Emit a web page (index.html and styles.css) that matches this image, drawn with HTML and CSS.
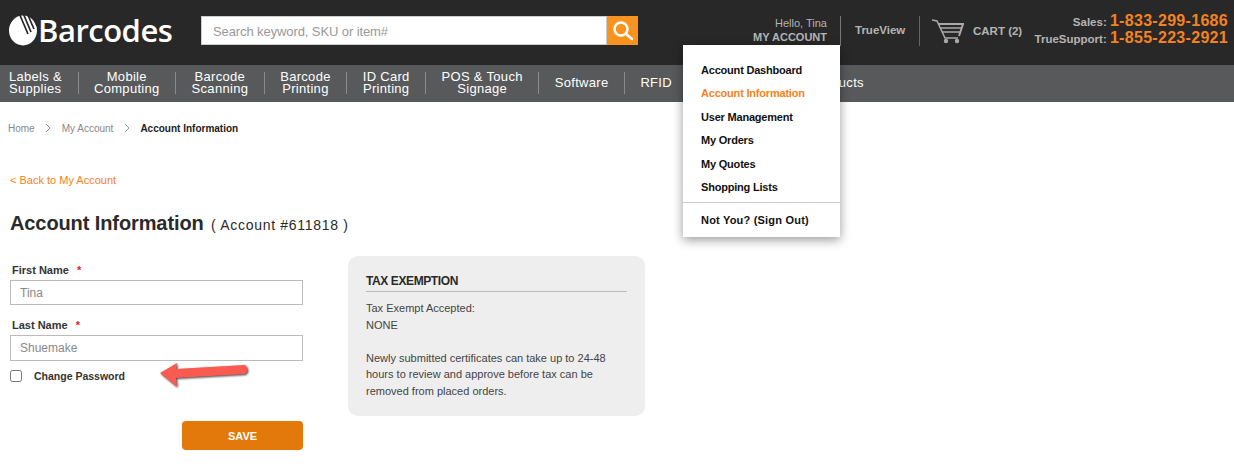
FILE: index.html
```html
<!DOCTYPE html>
<html lang="en">
<head>
  <meta charset="UTF-8" />
  <title>Account Information</title>
  <link rel="stylesheet" href="styles.css">
</head>
<body>

  <!-- Top bar -->
  <header class="topbar">
    <a class="logo" href="#">
      <svg class="logo-mark" viewBox="0 0 30 32" width="30" height="32">
        <ellipse cx="15" cy="16.500" rx="14" ry="15" fill="#fff"/>
        <path d="M11 -1 L20 20 M15 -1 L23 18 M19 -1 L26 15 M24 0 L29 12" stroke="#282828" stroke-width="1.700" fill="none"/>
      </svg>
      <span>Barcodes</span>
    </a>
    <form class="search">
      <input class="search-input" type="text" placeholder="Search keyword, SKU or item#">
      <button class="search-btn" type="button" aria-label="Search">
        <svg viewBox="0 0 24 24" width="24" height="24" fill="none" stroke="#fff" stroke-width="2.500" stroke-linecap="round">
          <circle cx="10" cy="10" r="6.500"/>
          <path d="M15 15 L21 20"/>
        </svg>
      </button>
    </form>
    <div class="top-links">
      <a class="account-link" href="#">
        <span class="hello">Hello, Tina</span>
        <b>MY ACCOUNT</b>
      </a>
      <a class="trueview" href="#">TrueView</a>
      <a class="cart" href="#">
        <svg viewBox="0 0 32 26" width="32" height="26" fill="none" stroke="#a9a9a9">
          <path d="M0 2 L5 3 L13 20 L26 20" stroke-width="1.500"/>
          <path d="M6 6 L31 6 L27 18" stroke-width="2"/>
          <path d="M8 10 L29 10 M10 14 L28 14" stroke-width="1.600"/>
          <circle cx="14" cy="23" r="2.200" fill="#a9a9a9" stroke="none"/>
          <circle cx="25" cy="23" r="2.200" fill="#a9a9a9" stroke="none"/>
        </svg>
        <span>CART (2)</span>
      </a>
      <div class="phones">
        <div><span class="phone-label">Sales:</span> <b>1-833-299-1686</b></div>
        <div><span class="phone-label">TrueSupport:</span> <b>1-855-223-2921</b></div>
      </div>
    </div>
  </header>

  <!-- Category nav -->
  <nav class="catnav">
    <a href="#" class="first">Labels &amp;<br>Supplies</a>
    <a href="#">Mobile<br>Computing</a>
    <a href="#">Barcode<br>Scanning</a>
    <a href="#">Barcode<br>Printing</a>
    <a href="#">ID Card<br>Printing</a>
    <a href="#">POS &amp; Touch<br>Signage</a>
    <a href="#">Software</a>
    <a href="#">RFID</a>
    <a href="#" class="last">More Products</a>
  </nav>

  <!-- Account dropdown -->
  <div class="account-menu">
    <ul>
      <li><a href="#">Account Dashboard</a></li>
      <li><a href="#" class="active">Account Information</a></li>
      <li><a href="#">User Management</a></li>
      <li><a href="#">My Orders</a></li>
      <li><a href="#">My Quotes</a></li>
      <li><a href="#">Shopping Lists</a></li>
    </ul>
    <a class="signout" href="#">Not You? (Sign Out)</a>
  </div>

  <main class="content">
    <div class="crumbs">
      <a href="#">Home</a>
      <svg class="crumb-sep" viewBox="0 0 6 10" width="6" height="10"><path d="M1 1 L5 5 L1 9" fill="none" stroke="#999"/></svg>
      <a href="#">My Account</a>
      <svg class="crumb-sep" viewBox="0 0 6 10" width="6" height="10"><path d="M1 1 L5 5 L1 9" fill="none" stroke="#999"/></svg>
      <b>Account Information</b>
    </div>

    <a class="back" href="#">&lt; Back to My Account</a>

    <h1>Account Information <small>( Account #611818 )</small></h1>

    <div class="columns">
      <form class="account-form">
        <label class="field-label">First Name <i>*</i></label>
        <input class="field" type="text" value="Tina">
        <label class="field-label second">Last Name <i>*</i></label>
        <input class="field tall" type="text" value="Shuemake">
        <div class="check-row">
          <input class="check" type="checkbox" id="pw">
          <label for="pw">Change Password</label>
          <!-- annotation arrow -->
          <svg class="arrow" viewBox="0 0 100 35" width="100" height="35">
            <path d="M10 18 L27 8 L26 14 L95 10 Q100 15 95 19 L26 23 L27 32 Z" fill="#fb5a50"/>
          </svg>
        </div>
        <div class="save-row">
          <button class="save" type="button">SAVE</button>
        </div>
      </form>

      <aside class="tax-box">
        <h2>TAX EXEMPTION</h2>
        <p>Tax Exempt Accepted:<br>NONE</p>
        <p>Newly submitted certificates can take up to 24-48 hours to review and approve before tax can be removed from placed orders.</p>
      </aside>
    </div>
  </main>

</body>
</html>
```

FILE: styles.css
```css
* {
  box-sizing: border-box;
}

body {
  margin: 0;
  height: 464px;
  overflow: hidden;
  position: relative;
  font-family: "Liberation Sans", Arial, sans-serif;
  background: #fff;
  color: #333;
}

a {
  text-decoration: none;
  color: inherit;
}

/* Top bar */
.topbar {
  height: 65px;
  background: #282828;
  display: flex;
  align-items: flex-start;
  padding-left: 8px;
}

.logo {
  display: flex;
  flex-shrink: 0;
  align-items: center;
  width: 193px;
  height: 32px;
  margin-top: 14px;
  color: #fff;
  font-family: "Open Sans", sans-serif;
  font-size: 31px;
  font-weight: 600;
  letter-spacing: -0.5px;
}

.search {
  display: flex;
  flex-shrink: 0;
  width: 437px;
  height: 29px;
  margin-top: 16px;
}

.search-input {
  flex: 1;
  border: 1px solid #ccc;
  padding: 1px 11px 0;
  font: 13px "Liberation Sans", Arial, sans-serif;
  letter-spacing: -0.1px;
  background: #fff;
}

.search-input::placeholder {
  color: #999;
}

.search-btn {
  width: 31px;
  border: none;
  padding: 0;
  background: #f7931e;
  display: flex;
  align-items: center;
  justify-content: center;
}

.top-links {
  flex: 1;
  display: flex;
  align-items: flex-start;
  color: #b4b4b4;
  font-size: 11.500px;
}

.account-link {
  margin-left: 115px;
  width: 74px;
  height: 30px;
  margin-top: 15px;
  text-align: right;
  line-height: 14px;
  font-size: 11px;
}

.account-link span, .account-link b {
  display: block;
  white-space: nowrap;
}

.account-link .hello {
  padding-top: 1px;
}

.trueview {
  margin-left: 13px;
  margin-top: 16px;
  height: 30px;
  width: 80px;
  padding-left: 14px;
  line-height: 28px;
  font-weight: bold;
  border-left: 1px solid #777;
  border-right: 1px solid #666;
}

.cart {
  display: flex;
  align-items: center;
  gap: 9px;
  margin-left: 12px;
  margin-top: 18px;
  font-weight: bold;
  width: 98px;
  height: 26px;
  white-space: nowrap;
}

.phones {
  flex: 1;
  margin-top: 12px;
  padding-right: 6px;
  text-align: right;
  line-height: 17px;
  font-size: 11.500px;
  white-space: nowrap;
}

.phones div {
  height: 17px;
}

.phones b {
  color: #f58220;
  font-size: 16px;
  letter-spacing: 0.3px;
}

.phone-label {
  font-weight: bold;
}

/* Category nav */
.catnav {
  height: 37px;
  background: #58595b;
  display: flex;
  align-items: center;
  padding: 0 0 1px 9px;
  color: #fff;
  font-size: 13px;
  line-height: 12px;
  letter-spacing: 0.3px;
  text-align: center;
}

.catnav a {
  padding: 0 15.500px;
  height: 22px;
  display: flex;
  align-items: center;
  border-right: 1px solid #8a8b8d;
  white-space: nowrap;
}

.catnav a.first {
  padding-left: 0;
  text-align: left;
}

.catnav a.last {
  border-right: none;
  padding-left: 87px;
}

/* Dropdown */
.account-menu {
  position: absolute;
  left: 683px;
  top: 45px;
  width: 157px;
  height: 192px;
  background: #fff;
  box-shadow: 0 3px 10px rgba(0, 0, 0, 0.4);
  color: #111;
  font-size: 11px;
  font-weight: bold;
}

.account-menu ul {
  list-style: none;
  margin: 0;
  padding: 14px 0 0;
  height: 158px;
  border-bottom: 1px solid #ccc;
  letter-spacing: -0.2px;
}

.account-menu li {
  height: 23.400px;
  line-height: 23px;
  padding-left: 18px;
}

.account-menu .active {
  color: #f58220;
}

.signout {
  display: block;
  padding-left: 18px;
  line-height: 34px;
  letter-spacing: 0.2px;
}

/* Page */
.content {
  padding: 0 10px;
}

.crumbs {
  display: flex;
  align-items: center;
  gap: 10.500px;
  height: 52px;
  margin-left: -2px;
  font-size: 10px;
  color: #888;
}

.crumbs b {
  color: #222;
}

.back {
  display: block;
  margin-top: 19px;
  font-size: 11px;
  line-height: 14px;
  color: #f58220;
}

h1 {
  margin: 22px 0 0;
  font-size: 20px;
  line-height: 28px;
  color: #2a2a2a;
  letter-spacing: -0.1px;
}

h1 small {
  font-size: 14px;
  font-weight: normal;
  letter-spacing: 0.7px;
  margin-left: 2px;
}

.columns {
  display: flex;
  gap: 45px;
  margin-top: 17px;
}

.account-form {
  width: 293px;
}

.field-label {
  display: block;
  height: 14px;
  padding-left: 2px;
  margin-bottom: 3px;
  font-size: 11px;
  font-weight: bold;
  line-height: 14px;
  margin-top: 7px;
}

.field-label i {
  color: #d9232e;
  margin-left: 5px;
  font-style: normal;
}

.field-label.second {
  margin-top: 13px;
}

.field {
  display: block;
  width: 100%;
  height: 25px;
  border: 1px solid #bbb;
  padding: 0 9px;
  font: 12px "Liberation Sans", Arial, sans-serif;
  color: #888;
}

.field.tall {
  height: 26px;
}

.check-row {
  display: flex;
  align-items: center;
  position: relative;
  height: 30px;
  font-size: 10.500px;
  font-weight: bold;
}

.check {
  width: 12px;
  height: 12px;
  margin: 0 12px 0 0;
}

.arrow {
  position: absolute;
  left: 140px;
  top: -6px;
  filter: drop-shadow(1px 1.500px 1px rgba(0, 0, 0, 0.75));
}

.save-row {
  display: flex;
  justify-content: flex-end;
  margin-top: 30px;
}

.save {
  width: 121px;
  height: 29px;
  border: none;
  border-radius: 4px;
  background: #e2790a;
  color: #fff;
  font: bold 11px "Liberation Sans", Arial, sans-serif;
}

.tax-box {
  width: 297px;
  height: 160px;
  padding: 18px 18px 0 18px;
  background: #eee;
  border-radius: 10px;
  font-size: 11px;
  line-height: 16.600px;
  color: #444;
}

.tax-box h2 {
  margin: 0 0 8px;
  padding-bottom: 2px;
  font-size: 12px;
  line-height: 15px;
  letter-spacing: -0.4px;
  color: #2a2a2a;
  border-bottom: 1px solid #bbb;
}

.tax-box p {
  margin: 0 0 16.600px;
}
```
